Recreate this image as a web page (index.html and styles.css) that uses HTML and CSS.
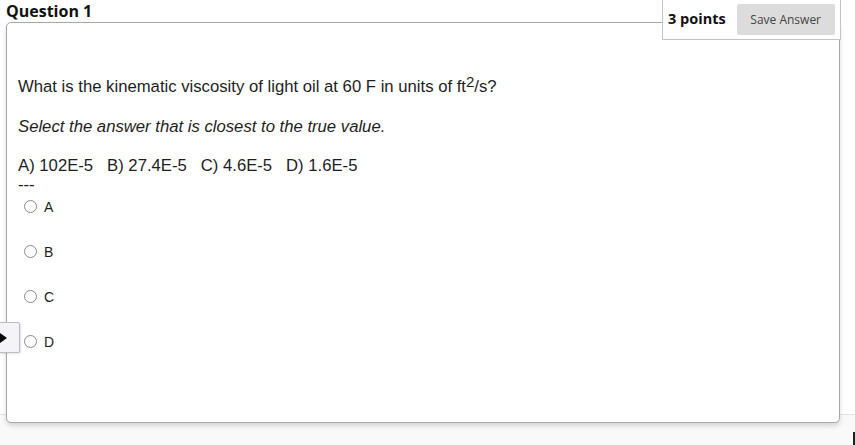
FILE: index.html
```html
<!DOCTYPE html>
<html>
<head>
<meta charset="utf-8">
<link rel="stylesheet" href="styles.css">
</head>
<body>
<div class="page">
  <div class="question">
    <h2 class="q-title">Question 1</h2>
    <div class="points-box">
      <span class="points">3 points</span>
      <button class="save-btn">Save Answer</button>
    </div>
    <div class="card">
      <p class="q-text">What is the kinematic viscosity of light oil at 60 F in units of ft<sup>2</sup>/s?</p>
      <p class="q-note">Select the answer that is closest to the true value.</p>
      <p class="q-choices">A) 102E-5&nbsp;&nbsp; B) 27.4E-5&nbsp;&nbsp; C) 4.6E-5&nbsp;&nbsp; D) 1.6E-5<br>---</p>
      <ul class="options">
        <li class="option"><span class="radio"></span><span class="opt-label">A</span></li>
        <li class="option"><span class="radio"></span><span class="opt-label">B</span></li>
        <li class="option"><span class="radio"></span><span class="opt-label">C</span></li>
        <li class="option"><span class="radio"></span><span class="opt-label">D</span></li>
      </ul>
    </div>
    <div class="pointer-tab"><span class="tri"></span></div>
  </div>
  <span class="edge-mark"></span>
</div>
</body>
</html>
```

FILE: styles.css
```css
html, body {
  margin: 0;
  padding: 0;
}
body {
  width: 855px;
  height: 445px;
  overflow: hidden;
  background: linear-gradient(to bottom, #ffffff 0, #ffffff 414px, #e4e4e4 414px, #e4e4e4 415px, #f9f9fa 415px);
  font-family: "Liberation Sans", Arial, sans-serif;
  color: #1e1e1e;
}
.page {
  position: relative;
  height: 445px;
}
.question {
  position: relative;
  padding-left: 6px;
  width: 834px;
}
.q-title {
  margin: 0;
  font-family: "Open Sans", sans-serif;
  font-weight: 700;
  font-size: 16px;
  line-height: 22px;
  color: #111;
}
.points-box {
  position: absolute;
  top: -1px;
  left: 662px;
  height: 41px;
  box-sizing: border-box;
  border: 1px solid #c4c4c4;
  border-top: none;
  background: #fff;
  display: flex;
  align-items: center;
  padding: 0 5px 0 5px;
  gap: 11px;
  z-index: 2;
  white-space: nowrap;
}
.points {
  font-family: "Open Sans", sans-serif;
  font-weight: 700;
  font-size: 14.5px;
  color: #111;
  margin-top: -1px;
}
.save-btn {
  font-family: "Open Sans", sans-serif;
  font-size: 12px;
  color: #444;
  background: #dcdcdc;
  border: none;
  border-radius: 2px;
  width: 98px;
  height: 31px;
  padding: 0;
  margin-top: 0;
  white-space: nowrap;
}
.card {
  box-sizing: border-box;
  height: 401px;
  border: 1px solid #a8a8a8;
  border-radius: 5px;
  background: #fff;
  box-shadow: 0 3px 5px rgba(0, 0, 0, 0.14);
  padding: 54px 11px 0 11px;
  position: relative;
  z-index: 1;
}
.q-text, .q-note, .q-choices {
  margin: 0;
  font-size: 16.7px;
  line-height: 20px;
}
.q-text sup {
  font-size: 15px;
  line-height: 0;
  vertical-align: 5px;
}
.q-note {
  margin-top: 20px;
  font-style: italic;
}
.q-choices {
  margin-top: 19px;
  line-height: 19px;
}
.options {
  list-style: none;
  margin: 0;
  padding: 0 0 0 6px;
}
.option {
  display: flex;
  align-items: center;
  height: 45px;
}
.option:first-child {
  margin-top: -10px;
}
.radio {
  width: 13px;
  height: 13px;
  box-sizing: border-box;
  border: 1px solid #8a8a8a;
  border-radius: 50%;
  background: #fff;
}
.opt-label {
  font-size: 14px;
  margin-left: 7px;
  color: #1e1e1e;
}
.pointer-tab {
  position: absolute;
  left: -2px;
  top: 322px;
  width: 22px;
  height: 31px;
  box-sizing: border-box;
  background: #f4f4f8;
  border: 1px solid #bdbdbd;
  border-radius: 2px;
  box-shadow: 1px 1px 2px rgba(0, 0, 0, 0.12);
  z-index: 3;
  display: flex;
  align-items: center;
}
.tri {
  width: 0;
  height: 0;
  margin-left: 1px;
  border-top: 5px solid transparent;
  border-bottom: 5px solid transparent;
  border-left: 7px solid #000;
}
.edge-mark {
  position: absolute;
  right: 0;
  top: 432px;
  width: 2px;
  height: 13px;
  background: #222;
}
```
